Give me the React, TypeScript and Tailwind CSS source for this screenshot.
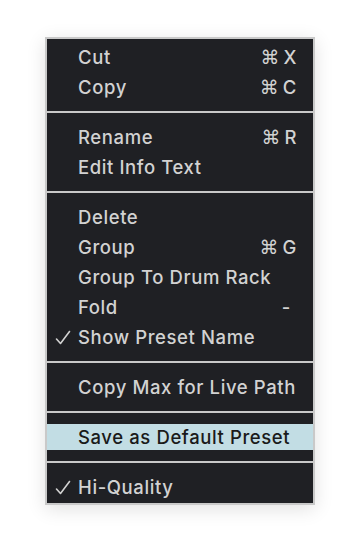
import React from "react";

type Item =
  | { kind: "item"; label: string; shortcut?: string; checked?: boolean; highlight?: boolean; dash?: boolean }
  | { kind: "sep" };

const items: Item[] = [
  { kind: "item", label: "Cut", shortcut: "X" },
  { kind: "item", label: "Copy", shortcut: "C" },
  { kind: "sep" },
  { kind: "item", label: "Rename", shortcut: "R" },
  { kind: "item", label: "Edit Info Text" },
  { kind: "sep" },
  { kind: "item", label: "Delete" },
  { kind: "item", label: "Group", shortcut: "G" },
  { kind: "item", label: "Group To Drum Rack" },
  { kind: "item", label: "Fold", dash: true },
  { kind: "item", label: "Show Preset Name", checked: true },
  { kind: "sep" },
  { kind: "item", label: "Copy Max for Live Path" },
  { kind: "sep" },
  { kind: "item", label: "Save as Default Preset", highlight: true },
  { kind: "sep" },
  { kind: "item", label: "Hi-Quality", checked: true },
];

function Check({ dark }: { dark?: boolean }) {
  return (
    <svg width="16" height="16" viewBox="0 0 16 16" className="absolute left-[8px] top-[6px]">
      <path d="M1.5 9 L5.5 13.5 L14.5 1.5" fill="none" stroke={dark ? "#1a1a1a" : "#d2d2d2"} strokeWidth="1.6" strokeLinecap="round" strokeLinejoin="round" />
    </svg>
  );
}

export default function App() {
  return (
    <div className="w-[360px] h-[560px] bg-white pt-[37px] pl-[45px]" style={{ fontFamily: "Inter, 'Noto Sans', sans-serif" }}>
      <div className="w-[270px] border-2 border-[#c9c9c9] bg-[#1f2024] pt-[3px] pb-[1px] shadow-[0_4px_18px_rgba(0,0,0,0.12)]">
        {items.map((it, i) =>
          it.kind === "sep" ? (
            <div key={i} className="h-[20px] flex items-center">
              <div className="h-[2px] w-full bg-[#c9c9c9]" />
            </div>
          ) : (
            <div key={i} className="h-[30px] py-[2px]">
              <div
                className={`relative h-[26px] flex items-center pl-[31px] pr-[16px] text-[18.5px] font-medium tracking-[0.6px] ${
                  it.highlight ? "bg-[#c2dde4] text-[#1a1a1a]" : "text-[#d2d2d2]"
                }`}
              >
                {it.checked && <Check dark={it.highlight} />}
                <span className="flex-1 leading-none pt-[1px]">{it.label}</span>
                {it.shortcut && (
                  <span className="flex items-center leading-none pt-[1px]">
                    <span className="text-[19px] mr-[4px] tracking-normal" style={{ fontFamily: "'DejaVu Sans', sans-serif" }}>⌘</span>
                    <span>{it.shortcut}</span>
                  </span>
                )}
                {it.dash && <span className="mr-[6px] leading-none">-</span>}
              </div>
            </div>
          )
        )}
      </div>
    </div>
  );
}
